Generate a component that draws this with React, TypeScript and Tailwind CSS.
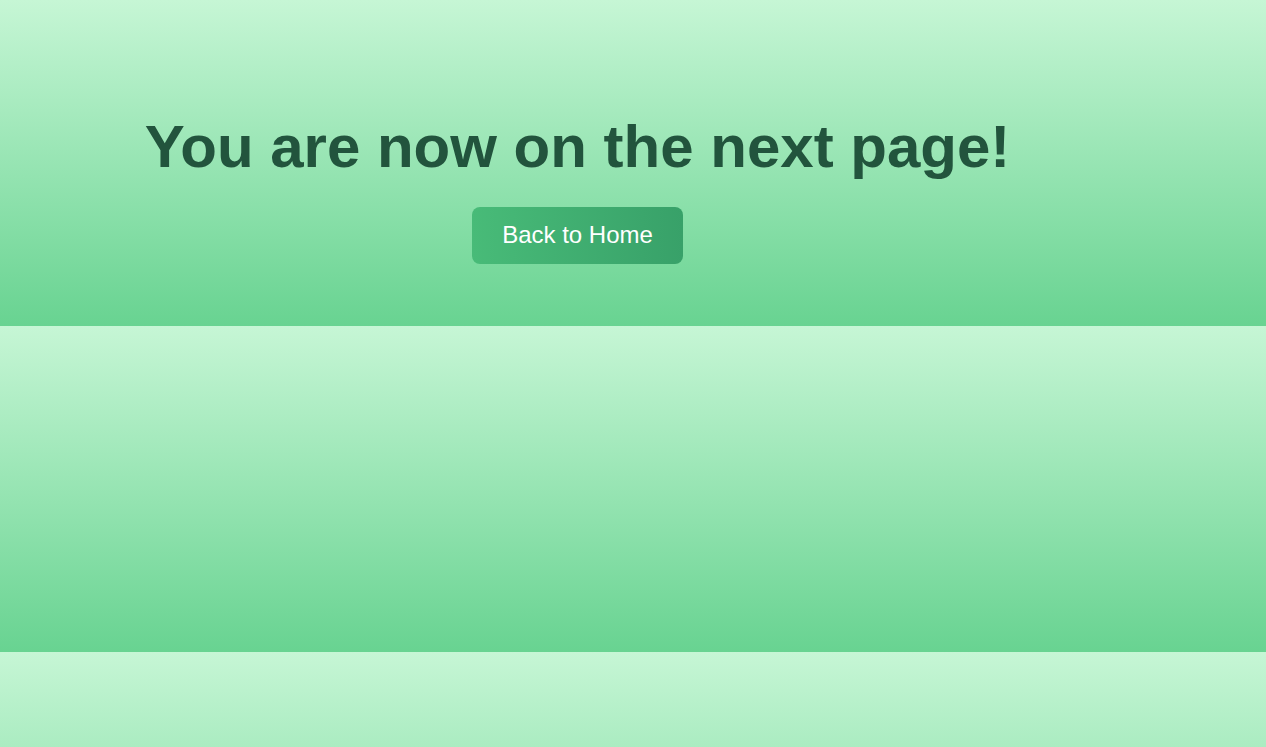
import React from 'react';

export default function App() {
  return (
    <div className="min-h-screen w-full bg-[linear-gradient(to_bottom,#c6f6d5,#68d391)] bg-[length:100%_326px] bg-repeat-y font-['Liberation_Sans',Arial,sans-serif]">
      <div className="w-[1155px] pt-[112px] text-center">
        <h1 className="text-[60px] font-bold leading-[1.15] text-[#22543d]">
          You are now on the next page!
        </h1>
        <button className="mt-[26px] rounded-lg bg-[linear-gradient(to_right,#48bb78,#38a169)] px-[30px] py-[14px] text-[24px] leading-[1.2] text-white">
          Back to Home
        </button>
      </div>
    </div>
  );
}
